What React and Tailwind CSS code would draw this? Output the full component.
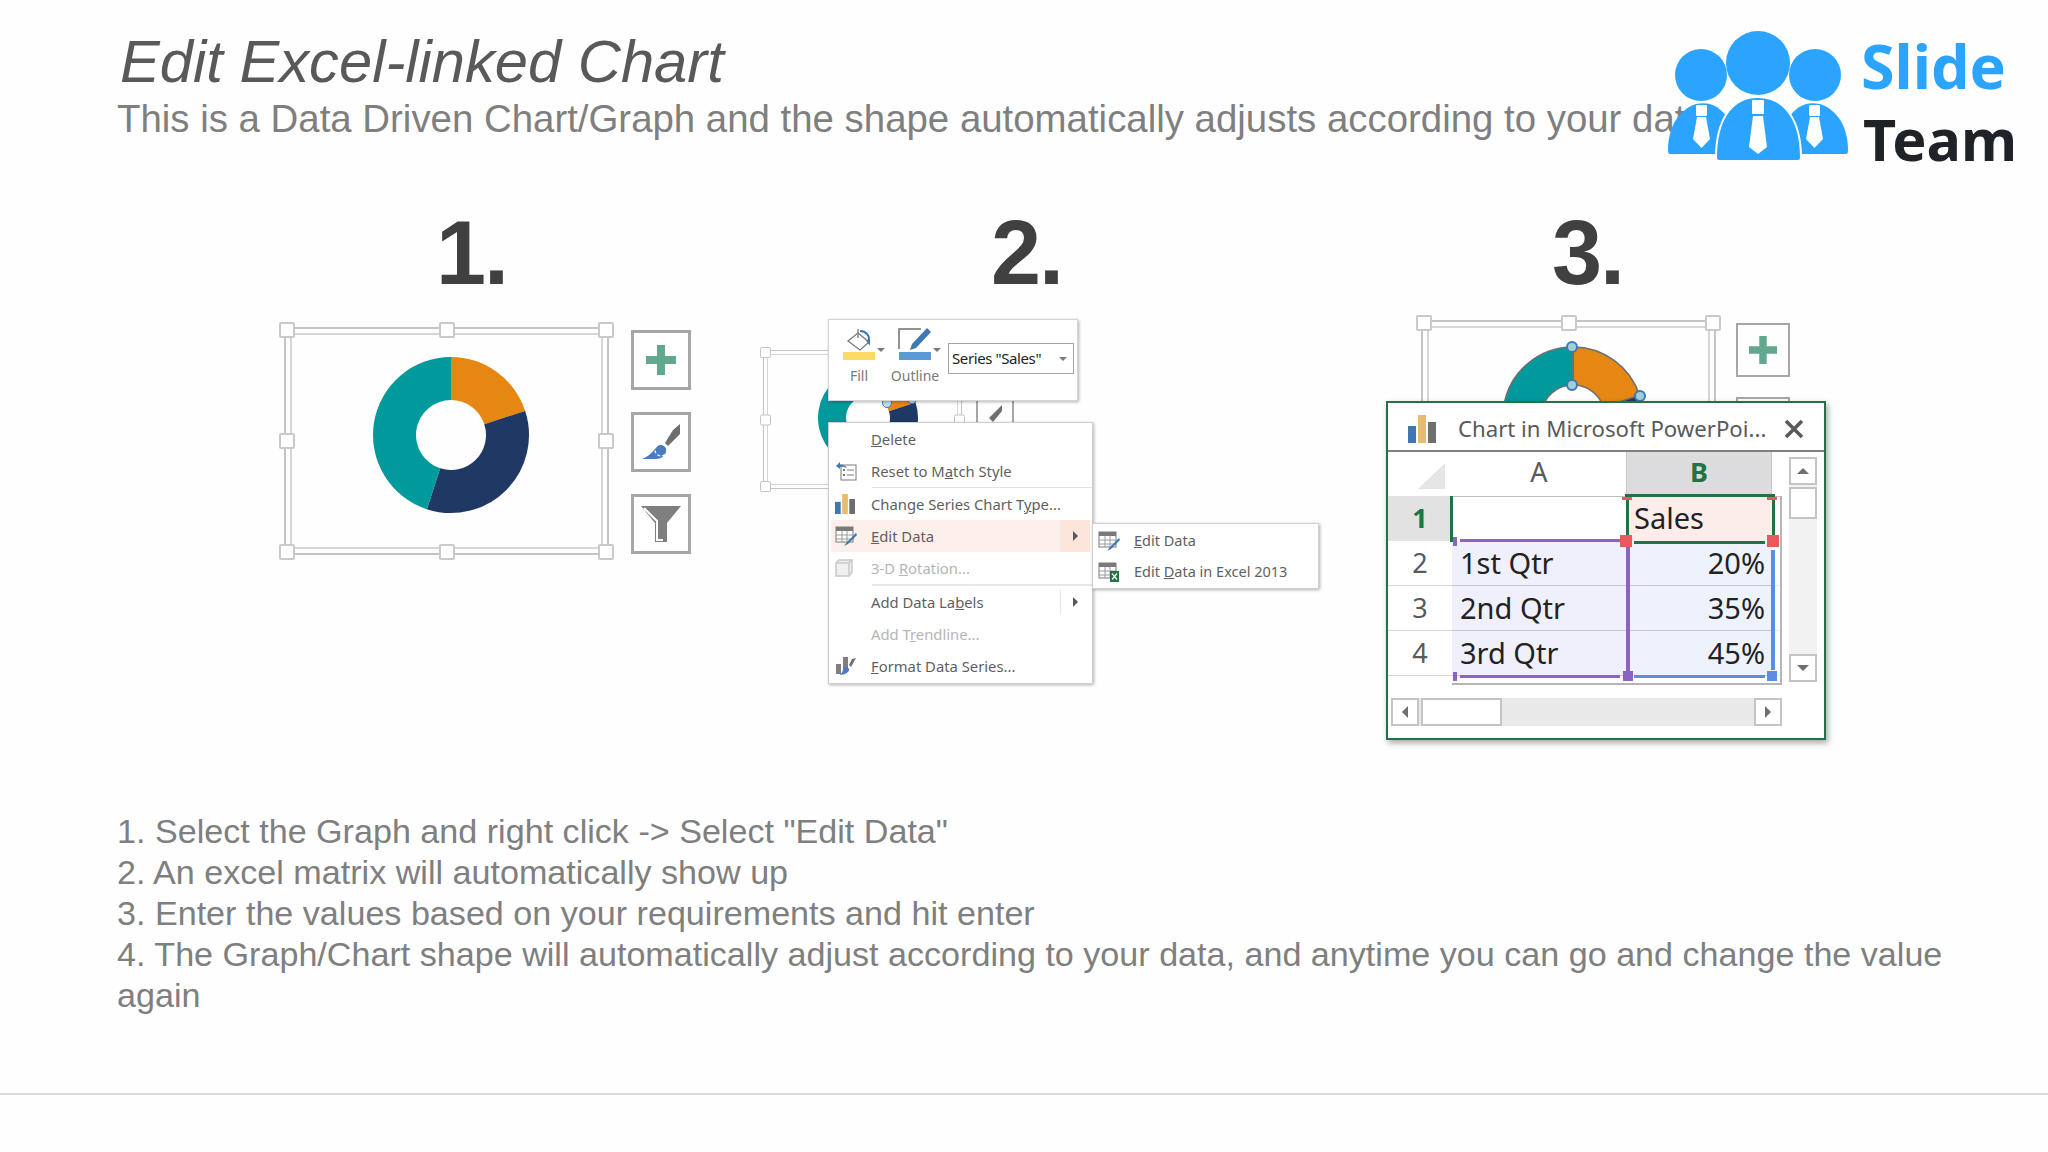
import React from 'react';

const SANS = "font-['Liberation_Sans',Arial,sans-serif]";

const segments = [
  { from: 0, to: 72, color: '#e58712' },
  { from: 72, to: 198, color: '#1f3864' },
  { from: 198, to: 360, color: '#009a9c' },
];

function arcPath(cx, cy, r, r2, from, to) {
  const pt = (rad, deg) => {
    const a = (deg * Math.PI) / 180;
    return [cx + rad * Math.sin(a), cy - rad * Math.cos(a)];
  };
  const [x1, y1] = pt(r, from);
  const [x2, y2] = pt(r, to);
  const [x3, y3] = pt(r2, to);
  const [x4, y4] = pt(r2, from);
  const big = to - from > 180 ? 1 : 0;
  return `M${x1} ${y1}A${r} ${r} 0 ${big} 1 ${x2} ${y2}L${x3} ${y3}A${r2} ${r2} 0 ${big} 0 ${x4} ${y4}Z`;
}

function Donut({ r, inner, stroke }) {
  const size = r * 2 + 4;
  const c = size / 2;
  return (
    <svg width={size} height={size} viewBox={`0 0 ${size} ${size}`} className="block">
      {segments.map((s) => (
        <path key={s.color} d={arcPath(c, c, r, inner, s.from, s.to)} fill={s.color} stroke={stroke} strokeWidth={stroke ? 1.5 : 0} />
      ))}
    </svg>
  );
}

const handleSpots = [
  'left-0 top-0',
  'left-1/2 -translate-x-1/2 top-0',
  'right-0 top-0',
  'left-0 top-1/2 -translate-y-1/2',
  'right-0 top-1/2 -translate-y-1/2',
  'left-0 bottom-0',
  'left-1/2 -translate-x-1/2 bottom-0',
  'right-0 bottom-0',
];

function SelectionFrame({ className, small, children }) {
  return (
    <div className={`relative ${className}`}>
      <div className={`absolute border-[#c4c4c4] ${small ? 'inset-[3px] border' : 'inset-[5px] border-2'}`}></div>
      <div className={`absolute border-[#d6d6d6] ${small ? 'inset-[7px] border' : 'inset-[11px] border-2'}`}></div>
      {handleSpots.map((spot) => (
        <div
          key={spot}
          className={`absolute ${spot} bg-white rounded-[2px] ${small ? 'w-[11px] h-[11px] border border-[#c4c4c4]' : 'w-[16px] h-[16px] border-2 border-[#c9c9c9]'}`}
        ></div>
      ))}
      {children}
    </div>
  );
}

function PlusIcon({ size = 30 }) {
  return (
    <svg width={size} height={size} viewBox="0 0 30 30">
      <path d="M11 0h8v11h11v8H19v11h-8V19H0v-8h11z" fill="#62a88e" />
    </svg>
  );
}

function BrushIcon() {
  return (
    <svg width="40" height="38" viewBox="0 0 40 38">
      <path d="M39 1v10l-8 8-4 4-3-3 3-5 5-8z" fill="#6f6f6f" />
      <path d="M20 22c-3 0-5 2-7 5-3 4-7 7-12 9h14c5 0 9-3 10-7 1-3-1-7-5-7z" fill="#4a7cc4" />
      <circle cx="20" cy="27" r="6" fill="none" stroke="#ffffff" strokeWidth="1.200" strokeDasharray="3 2" />
    </svg>
  );
}

function FunnelIcon() {
  return (
    <svg width="40" height="36" viewBox="0 0 40 36">
      <path d="M0 0h40L26 17v19H14V17z" fill="#7f7f7f" />
      <path d="M3 2l13 13v19h6" fill="none" stroke="#ffffff" strokeWidth="2" />
    </svg>
  );
}

function SideButton({ children }) {
  return (
    <div className="w-[60px] h-[60px] border-[3px] border-[#a6a6a6] flex items-center justify-center bg-white">
      {children}
    </div>
  );
}

function BarsIcon({ w = 20, h = 20 }) {
  return (
    <svg width={w} height={h} viewBox="0 0 28 28">
      <rect x="0" y="11" width="8" height="17" fill="#3f77b5" />
      <rect x="10" y="0" width="8" height="28" fill="#e6bd6e" />
      <rect x="20" y="7" width="8" height="21" fill="#6e6e6e" />
    </svg>
  );
}

function TableIcon({ excel }) {
  return (
    <svg width="22" height="22" viewBox="0 0 22 22">
      <rect x="1" y="2" width="17" height="15" fill="#ffffff" stroke="#7a7a7a" />
      <rect x="1" y="2" width="17" height="4" fill="#7a7a7a" />
      <path d="M1 10h17M1 14h17M7 6v11M12 6v11" stroke="#9a9a9a" fill="none" />
      {excel ? (
        <g>
          <rect x="12" y="10" width="9" height="11" fill="#217346" />
          <path d="M14 12.5l5 6M19 12.5l-5 6" stroke="#ffffff" strokeWidth="1.2" />
        </g>
      ) : (
        <path d="M21 8l-9 9-3 4 4-2 9-9z" fill="#3f77b5" />
      )}
    </svg>
  );
}

function ResetIcon() {
  return (
    <svg width="22" height="20" viewBox="0 0 22 20">
      <rect x="6" y="4" width="15" height="15" fill="#ffffff" stroke="#7a7a7a" />
      <path d="M12 9h7M12 14h7" stroke="#7a7a7a" />
      <rect x="8" y="8" width="2" height="2" fill="#7a7a7a" />
      <rect x="8" y="13" width="2" height="2" fill="#7a7a7a" />
      <path d="M1 5l4-4v2.500c3 0 6 1 7 4-2-1.500-4-2-7-1.500V8z" fill="#3f77b5" />
    </svg>
  );
}

function CubeIcon() {
  return (
    <svg width="18" height="18" viewBox="0 0 18 18">
      <path d="M4 1h13v12l-3 4H1V4z" fill="#f0f0f0" stroke="#c9c9c9" strokeWidth="1.500" />
      <path d="M1 4h13v13M14 4l3-3" fill="none" stroke="#c9c9c9" strokeWidth="1.500" />
    </svg>
  );
}

function FormatIcon() {
  return (
    <svg width="22" height="20" viewBox="0 0 22 20">
      <rect x="1" y="8" width="5" height="10" fill="#7f7f7f" />
      <rect x="8" y="1" width="5" height="13" fill="#7f7f7f" />
      <path d="M21 2l-5 9-2-2 3-6z" fill="#6f6f6f" />
      <path d="M11 11c3 0 4 3 2 5-2 2-5 3-9 3 2-1 3-2 4-5 1-2 2-3 3-3z" fill="#4a7cc4" />
    </svg>
  );
}

function MenuRow({ icon, children, muted, active, arrow }) {
  return (
    <div className={`relative h-[32px] flex items-center mx-[2px] ${active ? 'bg-[#fdf0ea]' : ''}`}>
      <div className="w-[40px] pl-[4px] flex justify-start shrink-0">{icon}</div>
      <span className={`text-[14.8px] ${muted ? 'text-[#b5b5b5]' : 'text-[#5f5f5f]'}`}>{children}</span>
      {arrow && (
        <div className={`absolute right-0 w-[30px] flex items-center justify-center ${active ? 'top-0 h-full bg-[#fce6dc]' : 'top-[4px] h-[24px] border-l border-[#e6e6e6]'}`}>
          <div className="w-0 h-0 border-y-[5px] border-y-transparent border-l-[5px] border-l-[#595959]"></div>
        </div>
      )}
    </div>
  );
}

function ContextMenu() {
  return (
    <div className="absolute left-[68px] top-[103px] w-[265px] h-[262px] bg-white border border-[#cfcfcf] shadow-[1px_1px_3px_rgba(0,0,0,0.3)]">
      <MenuRow><span className="underline">D</span>elete</MenuRow>
      <MenuRow icon={<ResetIcon />}>Reset to M<span className="underline">a</span>tch Style</MenuRow>
      <div className="ml-[43px] h-px bg-[#e2e2e2]"></div>
      <MenuRow icon={<BarsIcon />}>Change Series Chart T<span className="underline">y</span>pe...</MenuRow>
      <MenuRow icon={<TableIcon />} active arrow><span className="underline">E</span>dit Data</MenuRow>
      <MenuRow icon={<CubeIcon />} muted>3-D <span className="underline">R</span>otation...</MenuRow>
      <div className="ml-[43px] h-[2px] bg-[#e8e8e8]"></div>
      <MenuRow arrow>Add Data La<span className="underline">b</span>els</MenuRow>
      <MenuRow muted>Add T<span className="underline">r</span>endline...</MenuRow>
      <MenuRow icon={<FormatIcon />}><span className="underline">F</span>ormat Data Series...</MenuRow>
    </div>
  );
}

function SubMenu() {
  return (
    <div className="absolute left-[332px] top-[204px] w-[227px] h-[66px] bg-white border border-[#cfcfcf] shadow-[1px_1px_3px_rgba(0,0,0,0.3)] flex flex-col justify-center">
      <div className="h-[31px] flex items-center">
        <div className="w-[41px] pl-[5px] flex justify-start"><TableIcon /></div>
        <span className="text-[14.5px] text-[#5f5f5f]"><span className="underline">E</span>dit Data</span>
      </div>
      <div className="h-[31px] flex items-center">
        <div className="w-[41px] pl-[5px] flex justify-start"><TableIcon excel /></div>
        <span className="text-[14.5px] text-[#5f5f5f]">Edit <span className="underline">D</span>ata in Excel 2013</span>
      </div>
    </div>
  );
}

function FillIcon() {
  return (
    <svg width="34" height="32" viewBox="0 0 34 32">
      <path d="M16 5l11 9-9 8L6 13z" fill="#ffffff" stroke="#7a7a7a" strokeWidth="1.300" />
      <path d="M16 1v9" stroke="#7a7a7a" strokeWidth="1.300" />
      <path d="M18 3c6 0 10 4 9 12l-2-3" fill="none" stroke="#3f77b5" strokeWidth="2" />
      <rect x="1" y="24" width="32" height="8" fill="#ffd966" />
    </svg>
  );
}

function OutlineIcon() {
  return (
    <svg width="34" height="32" viewBox="0 0 34 32">
      <path d="M1 21V1h22" fill="none" stroke="#6f6f6f" strokeWidth="1.500" />
      <path d="M29 0l4 4-15 16-6 2 2-6z" fill="#3f77b5" />
      <rect x="1" y="24" width="32" height="8" fill="#5b9bd5" />
    </svg>
  );
}

function ChartToolbar() {
  return (
    <div className="absolute left-[68px] top-0 w-[250px] h-[82px] bg-white border border-[#d4d4d4] shadow-[1px_1px_3px_rgba(0,0,0,0.3)] flex items-start pl-[12px] pt-[8px]">
      <div className="flex flex-col items-center w-[36px]">
        <FillIcon />
        <span className="mt-[5px] text-[14px] text-[#7a7a7a]">Fill</span>
      </div>
      <div className="w-[5px] mt-[20px] border-x-[4px] border-x-transparent border-t-[4px] border-t-[#7a7a7a] h-0"></div>
      <div className="flex flex-col items-center w-[36px] ml-[12px]">
        <OutlineIcon />
        <span className="mt-[5px] text-[14px] text-[#7a7a7a]">Outline</span>
      </div>
      <div className="w-[5px] mt-[20px] border-x-[4px] border-x-transparent border-t-[4px] border-t-[#7a7a7a] h-0"></div>
      <div className="ml-[7px] mt-[15px] w-[126px] h-[31px] border border-[#a6a6a6] flex items-center justify-between pl-[3px] pr-[6px]">
        <span className="text-[15px] text-[#222222] tracking-[-0.4px]">Series "Sales"</span>
        <div className="border-x-[4px] border-x-transparent border-t-[4px] border-t-[#7a7a7a]"></div>
      </div>
    </div>
  );
}

function HeaderCell({ children, active }) {
  return (
    <div className={`flex justify-center pt-[2px] text-[27px] leading-[36px] border-r border-[#c8c8c8] ${active ? 'bg-[#dcdcde] text-[#217346] font-bold' : 'text-[#5a5a5a]'}`}>
      {children}
    </div>
  );
}

const sheetRows = [
  { n: '2', a: '1st Qtr', b: '20%' },
  { n: '3', a: '2nd Qtr', b: '35%' },
  { n: '4', a: '3rd Qtr', b: '45%' },
];

function Sheet() {
  return (
    <div className="relative w-[394px] h-[233px] grid grid-cols-[64px_175px_145px_10px] grid-rows-[44px_45px_45px_45px_45px_9px]">
      <div className="relative">
        <div className="absolute left-[30px] top-[11px] w-0 h-0 border-l-[27px] border-l-transparent border-b-[26px] border-b-[#e6e6e6]"></div>
      </div>
      <HeaderCell>A</HeaderCell>
      <HeaderCell active>B</HeaderCell>
      <div></div>

      <div className="bg-[#e2e2e2] flex items-center justify-center text-[27px] font-bold text-[#217346]">1</div>
      <div className="border-t border-[#bdbdbd]"></div>
      <div className="bg-[#fdedea] border-t border-[#bdbdbd] flex items-center pl-[7px] pb-[2px] text-[29px] text-[#222222]">Sales</div>
      <div className="border-t border-[#bdbdbd]"></div>

      {sheetRows.map((row) => (
        <React.Fragment key={row.n}>
          <div className="flex items-center justify-center text-[27px] text-[#5a5a5a] border-b border-[#d8d8d8]">{row.n}</div>
          <div className="bg-[#eff0fb] border-b border-[#c9c9c9] flex items-center pl-[8px] text-[29px] text-[#222222]">{row.a}</div>
          <div className="bg-[#eef2fc] border-b border-[#c9c9c9] flex items-center justify-end pr-[7px] text-[29px] text-[#222222]">{row.b}</div>
          <div className="border-b border-[#eeeeee]"></div>
        </React.Fragment>
      ))}
      <div></div>
      <div className="col-span-3 border-b-2 border-[#b5b5b5]"></div>

      {/* outline + range markers on top of the cells */}
      <div className="absolute left-[64px] top-[44px] w-[330px] h-[189px] border-r-2 border-b-2 border-[#b5b5b5]"></div>
      <div className="absolute left-[237px] top-[42px] w-[150px] h-[3px] bg-[#217346]"></div>
      <div className="absolute left-[62px] top-[44px] w-[3px] h-[46px] bg-[#217346]"></div>
      <div className="absolute left-[238px] top-[47px] w-[3px] h-[36px] bg-[#217346]"></div>
      <div className="absolute left-[384px] top-[47px] w-[3px] h-[36px] bg-[#217346]"></div>
      <div className="absolute left-[246px] top-[89px] w-[131px] h-[3px] bg-[#217346]"></div>

      <div className="absolute left-[72px] top-[87px] w-[160px] h-[3px] bg-[#8a63c4]"></div>
      <div className="absolute left-[72px] top-[223px] w-[160px] h-[3px] bg-[#8a63c4]"></div>
      <div className="absolute left-[238px] top-[95px] w-[4px] h-[125px] bg-[#8a63c4]"></div>
      <div className="absolute left-[65px] top-[85px] w-[4px] h-[9px] bg-[#8a63c4]"></div>
      <div className="absolute left-[65px] top-[220px] w-[4px] h-[9px] bg-[#8a63c4]"></div>
      <div className="absolute left-[235px] top-[219px] w-[10px] h-[10px] bg-[#8a63c4]"></div>

      <div className="absolute left-[246px] top-[223px] w-[131px] h-[3px] bg-[#5b8de0]"></div>
      <div className="absolute left-[383px] top-[98px] w-[4px] h-[120px] bg-[#5b8de0]"></div>
      <div className="absolute left-[379px] top-[219px] w-[10px] h-[10px] bg-[#5b8de0]"></div>

      <div className="absolute left-[232px] top-[83px] w-[12px] h-[12px] bg-[#e8585c]"></div>
      <div className="absolute left-[379px] top-[83px] w-[12px] h-[12px] bg-[#e8585c]"></div>
      <div className="absolute left-[234px] top-[45px] w-[10px] h-[3px] bg-[#e8585c]"></div>
      <div className="absolute left-[379px] top-[45px] w-[10px] h-[3px] bg-[#e8585c]"></div>
    </div>
  );
}

function ScrollButton({ dir }) {
  const arrow = {
    up: 'border-x-[6px] border-x-transparent border-b-[6px] border-b-[#6f6f6f]',
    down: 'border-x-[6px] border-x-transparent border-t-[6px] border-t-[#6f6f6f]',
    left: 'border-y-[6px] border-y-transparent border-r-[6px] border-r-[#6f6f6f]',
    right: 'border-y-[6px] border-y-transparent border-l-[6px] border-l-[#6f6f6f]',
  }[dir];
  return (
    <div className="w-[28px] h-[28px] shrink-0 bg-white border-2 border-[#c4c4c4] flex items-center justify-center">
      <div className={`w-0 h-0 ${arrow}`}></div>
    </div>
  );
}

function ExcelWindow() {
  return (
    <div className="absolute left-0 top-[86px] w-[440px] h-[339px] bg-white border-2 border-[#217346] shadow-[2px_3px_6px_rgba(0,0,0,0.35)] font-['Noto_Sans',sans-serif]">
      <div className="h-[49px] border-b-2 border-[#7f7f7f] flex items-center pl-[20px] pr-[20px] pt-[5px]">
        <BarsIcon w={28} h={28} />
        <span className="ml-[22px] text-[22.2px] text-[#595959] whitespace-nowrap">Chart in Microsoft PowerPoi...</span>
        <svg width="20" height="20" viewBox="0 0 20 20" className="ml-auto">
          <path d="M2 2l16 16M18 2L2 18" stroke="#595959" strokeWidth="3.500" />
        </svg>
      </div>
      <div className="flex">
        <Sheet />
        <div className="ml-[7px] mt-[5px] w-[28px] h-[225px] flex flex-col bg-[#f2f2f2]">
          <ScrollButton dir="up" />
          <div className="mt-[2px] h-[32px] bg-white border-2 border-[#c4c4c4]"></div>
          <div className="flex-1"></div>
          <ScrollButton dir="down" />
        </div>
      </div>
      <div className="ml-[3px] mt-[13px] w-[391px] flex bg-[#e9e9e9]">
        <ScrollButton dir="left" />
        <div className="ml-[2px] w-[81px] h-[28px] bg-white border-2 border-[#c4c4c4]"></div>
        <div className="flex-1"></div>
        <ScrollButton dir="right" />
      </div>
    </div>
  );
}

function StepNumber({ className, children }) {
  return (
    <div className={`${SANS} font-bold text-[90px] leading-[97px] tracking-[-2px] text-[#404040] ${className}`}>{children}</div>
  );
}

function StepOne() {
  return (
    <div className="ml-[279px] w-[412px]">
      <StepNumber className="h-[117px] pl-[157px]">1.</StepNumber>
      <div className="flex items-start">
        <SelectionFrame className="w-[335px] h-[238px]">
          <div className="absolute left-[92px] top-[33px]">
            <Donut r={78} inner={35} />
          </div>
        </SelectionFrame>
        <div className="ml-[17px] mt-[8px] flex flex-col gap-[22px]">
          <SideButton><PlusIcon /></SideButton>
          <SideButton><BrushIcon /></SideButton>
          <SideButton><FunnelIcon /></SideButton>
        </div>
      </div>
    </div>
  );
}

function StepTwo() {
  return (
    <div className="ml-[69px] w-[559px] font-['Noto_Sans',sans-serif]">
      <StepNumber className="h-[114px] pl-[231px]">2.</StepNumber>
      <div className="relative h-[365px]">
        <SelectionFrame small className="absolute left-0 top-[28px] w-[205px] h-[145px]">
          <div className="absolute left-[56px] top-[19px]">
            <Donut r={50} inner={22} />
          </div>
          <div className="absolute left-[122px] top-[51px] w-[10px] h-[10px] rounded-full bg-[#bfe0e6] border border-[#3f77b5]"></div>
          <div className="absolute left-[147px] top-[47px] w-[10px] h-[10px] rounded-full bg-[#bfe0e6] border border-[#3f77b5]"></div>
        </SelectionFrame>
        <div className="absolute left-[216px] top-[78px] w-[38px] h-[30px] border-2 border-[#a6a6a6] overflow-hidden flex justify-center">
          <svg width="16" height="18" viewBox="0 0 16 18" className="mt-[6px]"><path d="M15 0v6L6 17 2 13z" fill="#6f6f6f" /></svg>
        </div>
        <ChartToolbar />
        <ContextMenu />
        <SubMenu />
      </div>
    </div>
  );
}

function StepThree() {
  return (
    <div className="ml-[67px] w-[441px]">
      <StepNumber className="h-[110px] pl-[166px]">3.</StepNumber>
      <div className="relative h-[424px]">
        <div className="ml-[30px] flex items-start">
          <SelectionFrame className="w-[305px] h-[238px]">
            <div className="absolute left-[85px] top-[30px]">
              <Donut r={70} inner={32} stroke="#6b7070" />
            </div>
            <div className="absolute left-[150px] top-[26px] w-[12px] h-[12px] rounded-full bg-[#9fd0d8] border-2 border-[#3f77b5]"></div>
            <div className="absolute left-[150px] top-[64px] w-[12px] h-[12px] rounded-full bg-[#9fd0d8] border-2 border-[#3f77b5]"></div>
            <div className="absolute left-[218px] top-[75px] w-[12px] h-[12px] rounded-full bg-[#9fd0d8] border-2 border-[#3f77b5]"></div>
          </SelectionFrame>
          <div className="ml-[15px] mt-[8px] flex flex-col gap-[20px]">
            <div className="w-[54px] h-[54px] border-[2px] border-[#a6a6a6] flex items-center justify-center"><PlusIcon size={28} /></div>
            <div className="w-[54px] h-[54px] border-[2px] border-[#a6a6a6]"></div>
          </div>
        </div>
        <ExcelWindow />
      </div>
    </div>
  );
}

function Logo() {
  return (
    <div className="absolute left-[1660px] top-[20px] flex items-start">
      <svg width="195" height="145" viewBox="1660 20 195 145" className="block">
        <g fill="#2ba4ff">
          <circle cx="1701" cy="75" r="26" />
          <circle cx="1815" cy="75" r="26" />
          <circle cx="1758" cy="63" r="32" />
          <path d="M1668 150c0-22 10-40 28-46 5-1 10-1 14 0 10 3 18 12 22 22l-12 28h-50q-2 0-2-4z" />
          <path d="M1848 150c0-22-10-40-28-46-5-1-10-1-14 0-10 3-18 12-22 22l12 28h50q2 0 2-4z" />
          <path d="M1716 158c0-36 14-61 42-61s43 25 43 61q0 3-3 3h-79q-3 0-3-3z" stroke="#ffffff" strokeWidth="2" />
        </g>
        <g fill="#ffffff">
          <rect x="1752" y="100" width="12" height="14" rx="1" />
          <path d="M1753 116h10l4 31-9 7-9-7z" />
          <rect x="1696" y="105" width="11" height="11" rx="1" />
          <path d="M1697 117h9l4 22-8.500 9-8.500-9z" />
          <rect x="1809" y="105" width="11" height="11" rx="1" />
          <path d="M1810 117h9l4 22-8.500 9-8.500-9z" />
        </g>
      </svg>
      <div className="ml-[6px] font-['Noto_Sans',sans-serif] font-bold">
        <div className="text-[61px] leading-[64px] mt-[14px] text-[#2ba4ff]">Slide</div>
        <div className="ml-[2px] text-[57.5px] leading-[64px] mt-[9px] text-[#1f2328]">Team</div>
      </div>
    </div>
  );
}

export default function App() {
  return (
    <div className={`relative w-[2048px] h-[1152px] overflow-hidden bg-[#fefefe] ${SANS}`}>
      <header className="pl-[120px] pt-[25px]">
        <h1 className="italic text-[59.7px] leading-[74px] text-[#595959]">Edit Excel-linked Chart</h1>
        <p className="-ml-[3px] -mt-[2px] text-[38.4px] leading-[44px] text-[#7f7f7f] whitespace-nowrap">
          This is a Data Driven Chart/Graph and the shape automatically adjusts according to your data
        </p>
      </header>

      <Logo />

      <section className="mt-[64px] flex items-start h-[534px]">
        <StepOne />
        <StepTwo />
        <StepThree />
      </section>

      <section className="mt-[72px] ml-[117px] w-[1840px] text-[34.12px] leading-[41px] text-[#7f7f7f]">
        <p>1. Select the Graph and right click -&gt; Select "Edit Data"</p>
        <p>2. An excel matrix will automatically show up</p>
        <p>3. Enter the values based on your requirements and hit enter</p>
        <p>4. The Graph/Chart shape will automatically adjust according to your data, and anytime you can go and change the value again</p>
      </section>

      <div className="mt-[77px] h-[2px] bg-[#d9d9d9]"></div>
    </div>
  );
}
